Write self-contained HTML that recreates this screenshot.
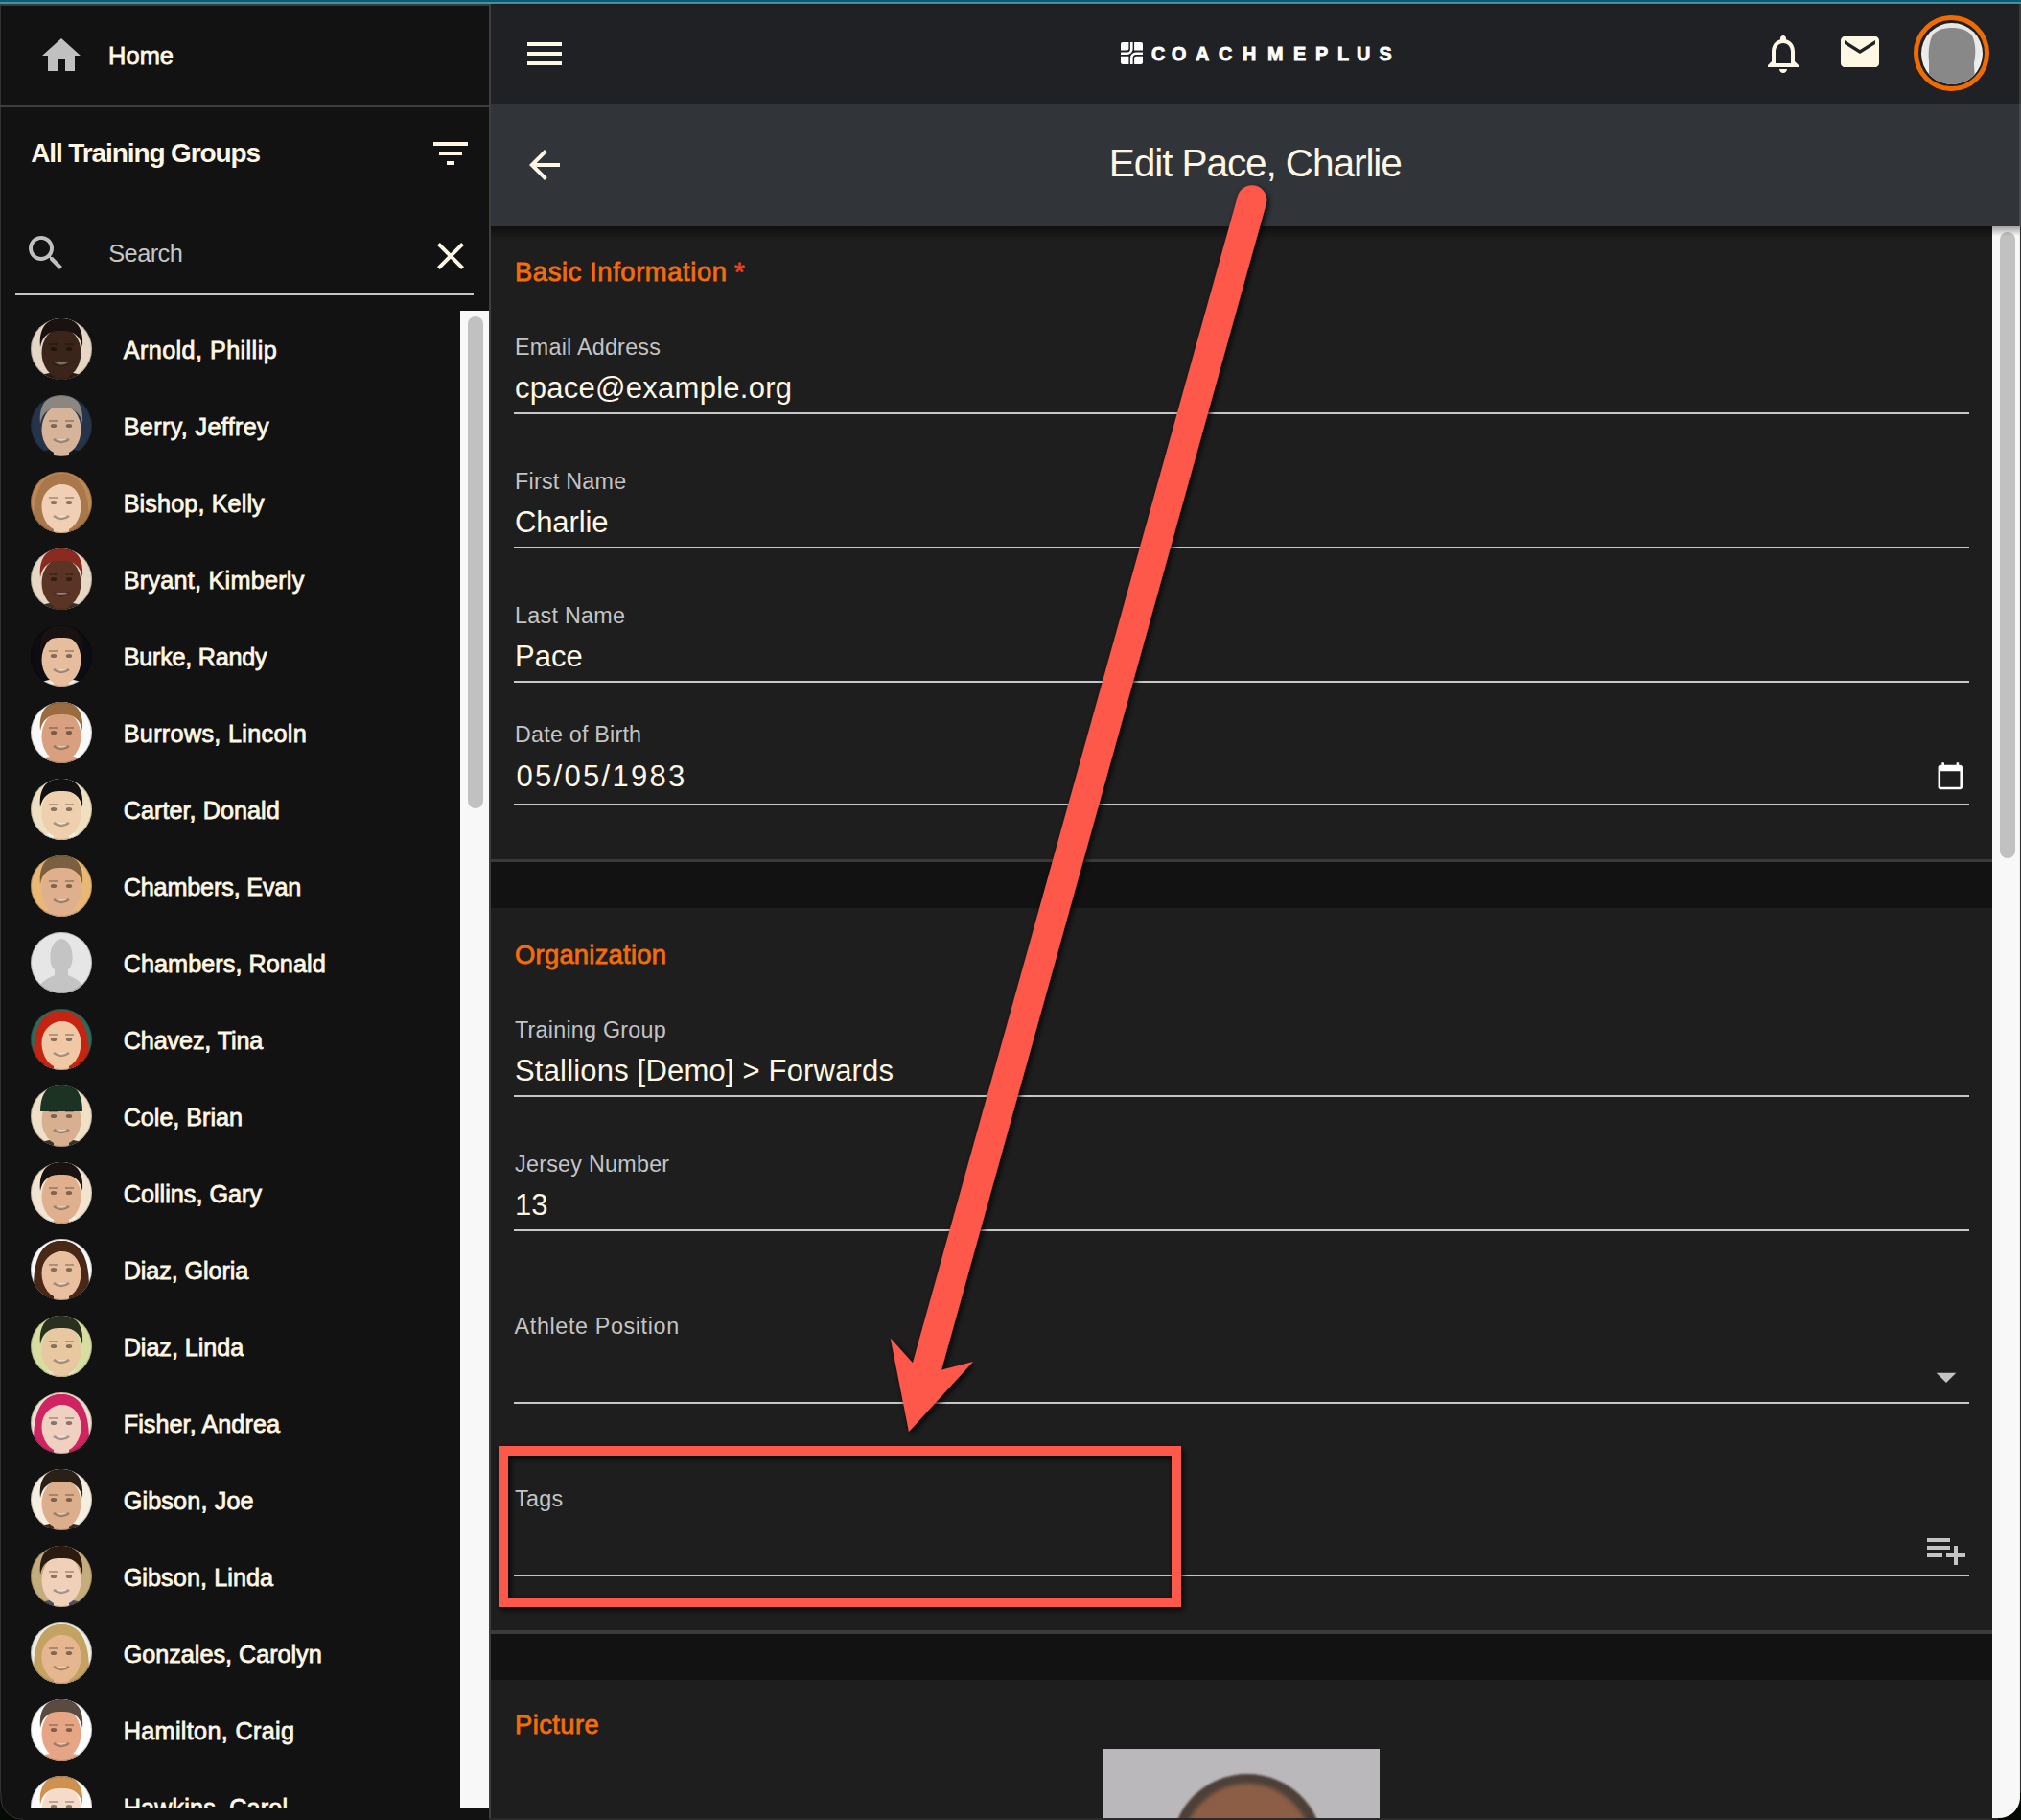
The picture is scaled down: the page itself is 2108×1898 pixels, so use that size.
<!DOCTYPE html>
<html><head><meta charset="utf-8"><title>Edit Pace, Charlie</title>
<style>
html,body{margin:0;padding:0}
body{width:2108px;height:1898px;position:relative;overflow:hidden;background:#121212;font-family:"Liberation Sans",sans-serif}
.a{position:absolute}
.t{position:absolute;white-space:nowrap;line-height:1;font-family:"Liberation Sans",sans-serif}
.ic{position:absolute}
.av{position:absolute}
.ul{position:absolute;left:536px;width:1518px;height:2px;background:#c8c8c8}
.lg{position:absolute;top:46.5px;font-size:19.8px;line-height:1;font-weight:700;color:#ffffff;-webkit-text-stroke:0.9px #fff;font-family:"Liberation Sans",sans-serif}
</style></head><body>
<!-- top teal bar -->
<div class="a" style="left:0;top:0;width:2108px;height:2px;background:#065d74"></div>
<div class="a" style="left:0;top:2px;width:2108px;height:2px;background:#4b8e9d"></div>
<div class="a" style="left:0;top:4px;width:510px;height:2px;background:#3a3a3a"></div>
<div class="a" style="left:512px;top:4px;width:1596px;height:1px;background:#1e1c1e"></div>
<!-- sidebar -->
<div class="a" style="left:0;top:6px;width:1px;height:1880px;background:#333"></div>
<div class="a" style="left:0;top:110px;width:510px;height:2px;background:#3e3e3e"></div>
<div class="a" style="left:16px;top:306px;width:478px;height:2px;background:#c4c4c4"></div>
<div class="a" style="left:0;top:324px;width:510px;height:1562px;overflow:hidden">
  <div class="a" style="left:0;top:-324px;width:510px;height:1898px">
  <svg class='av' style='left:32px;top:332px' width='64' height='64' viewBox='0 0 64 64'><defs><clipPath id='c0'><circle cx='32' cy='32' r='32'/></clipPath></defs><g clip-path='url(#c0)'><rect width='64' height='64' fill='#e6d6c6'/><ellipse cx='32' cy='72' rx='36' ry='16' fill='#2a1a14'/><rect x='24' y='50' width='16' height='14' fill='#3b2419'/><ellipse cx='32' cy='36' rx='20.5' ry='26' fill='#3b2419'/><path d='M10 30 C8 6 20 0 32 0 C44 0 56 6 54 30 C52 18 44 12 32 13 C20 12 12 18 10 30Z' fill='#1a1210'/><ellipse cx='24' cy='32' rx='3.2' ry='2' fill='#00000070'/><ellipse cx='40' cy='32' rx='3.2' ry='2' fill='#00000070'/><path d='M19 27 h9 M36 27 h9' stroke='#00000040' stroke-width='2'/><path d='M24 46 Q32 52 40 46' stroke='#00000050' stroke-width='2.5' fill='#ffffff60'/></g><circle cx='32' cy='32' r='31.5' fill='none' stroke='#00000030' stroke-width='1'/></svg>
<svg class='av' style='left:32px;top:412px' width='64' height='64' viewBox='0 0 64 64'><defs><clipPath id='c1'><circle cx='32' cy='32' r='32'/></clipPath></defs><g clip-path='url(#c1)'><rect width='64' height='64' fill='#26344a'/><ellipse cx='32' cy='72' rx='36' ry='16' fill='#15151a'/><rect x='24' y='50' width='16' height='14' fill='#d6b49a'/><ellipse cx='32' cy='36' rx='20.5' ry='26' fill='#d6b49a'/><path d='M10 30 C8 6 20 0 32 0 C44 0 56 6 54 30 C52 18 44 12 32 13 C20 12 12 18 10 30Z' fill='#8c8680'/><ellipse cx='24' cy='32' rx='3.2' ry='2' fill='#00000070'/><ellipse cx='40' cy='32' rx='3.2' ry='2' fill='#00000070'/><path d='M19 27 h9 M36 27 h9' stroke='#00000040' stroke-width='2'/><path d='M24 46 Q32 52 40 46' stroke='#00000050' stroke-width='2.5' fill='#ffffff60'/></g><circle cx='32' cy='32' r='31.5' fill='none' stroke='#00000030' stroke-width='1'/></svg>
<svg class='av' style='left:32px;top:492px' width='64' height='64' viewBox='0 0 64 64'><defs><clipPath id='c2'><circle cx='32' cy='32' r='32'/></clipPath></defs><g clip-path='url(#c2)'><rect width='64' height='64' fill='#c08a58'/><ellipse cx='32' cy='72' rx='36' ry='16' fill='#c08a58'/><path d='M4 64 C0 24 10 2 32 2 C54 2 64 24 60 64Z' fill='#a8784a'/><rect x='24' y='50' width='16' height='14' fill='#f0cfb5'/><ellipse cx='32' cy='36' rx='20.5' ry='26' fill='#f0cfb5'/><path d='M10 36 C8 8 20 2 32 2 C44 2 56 8 54 36 C50 18 42 12 30 13 C20 15 13 22 10 36Z' fill='#a8784a'/><ellipse cx='24' cy='32' rx='3.2' ry='2' fill='#00000070'/><ellipse cx='40' cy='32' rx='3.2' ry='2' fill='#00000070'/><path d='M19 27 h9 M36 27 h9' stroke='#00000040' stroke-width='2'/><path d='M24 46 Q32 52 40 46' stroke='#00000050' stroke-width='2.5' fill='#ffffff60'/></g><circle cx='32' cy='32' r='31.5' fill='none' stroke='#00000030' stroke-width='1'/></svg>
<svg class='av' style='left:32px;top:572px' width='64' height='64' viewBox='0 0 64 64'><defs><clipPath id='c3'><circle cx='32' cy='32' r='32'/></clipPath></defs><g clip-path='url(#c3)'><rect width='64' height='64' fill='#e6d8c4'/><ellipse cx='32' cy='72' rx='36' ry='16' fill='#3a3028'/><rect x='24' y='50' width='16' height='14' fill='#5a3424'/><ellipse cx='32' cy='36' rx='20.5' ry='26' fill='#5a3424'/><path d='M10 30 C8 6 20 0 32 0 C44 0 56 6 54 30 C52 18 44 12 32 13 C20 12 12 18 10 30Z' fill='#8a2a20'/><ellipse cx='24' cy='32' rx='3.2' ry='2' fill='#00000070'/><ellipse cx='40' cy='32' rx='3.2' ry='2' fill='#00000070'/><path d='M19 27 h9 M36 27 h9' stroke='#00000040' stroke-width='2'/><path d='M24 46 Q32 52 40 46' stroke='#00000050' stroke-width='2.5' fill='#ffffff60'/></g><circle cx='32' cy='32' r='31.5' fill='none' stroke='#00000030' stroke-width='1'/></svg>
<svg class='av' style='left:32px;top:652px' width='64' height='64' viewBox='0 0 64 64'><defs><clipPath id='c4'><circle cx='32' cy='32' r='32'/></clipPath></defs><g clip-path='url(#c4)'><rect width='64' height='64' fill='#0c0c12'/><ellipse cx='32' cy='72' rx='36' ry='16' fill='#f0ece6'/><rect x='24' y='50' width='16' height='14' fill='#e6be9e'/><ellipse cx='32' cy='36' rx='20.5' ry='26' fill='#e6be9e'/><path d='M10 30 C8 6 20 0 32 0 C44 0 56 6 54 30 C52 18 44 12 32 13 C20 12 12 18 10 30Z' fill='#1a1210'/><ellipse cx='24' cy='32' rx='3.2' ry='2' fill='#00000070'/><ellipse cx='40' cy='32' rx='3.2' ry='2' fill='#00000070'/><path d='M19 27 h9 M36 27 h9' stroke='#00000040' stroke-width='2'/><path d='M24 46 Q32 52 40 46' stroke='#00000050' stroke-width='2.5' fill='#ffffff60'/></g><circle cx='32' cy='32' r='31.5' fill='none' stroke='#00000030' stroke-width='1'/></svg>
<svg class='av' style='left:32px;top:732px' width='64' height='64' viewBox='0 0 64 64'><defs><clipPath id='c5'><circle cx='32' cy='32' r='32'/></clipPath></defs><g clip-path='url(#c5)'><rect width='64' height='64' fill='#fafafa'/><ellipse cx='32' cy='72' rx='36' ry='16' fill='#d8a07e'/><rect x='24' y='50' width='16' height='14' fill='#d8a07e'/><ellipse cx='32' cy='36' rx='20.5' ry='26' fill='#d8a07e'/><path d='M10 30 C8 6 20 0 32 0 C44 0 56 6 54 30 C52 18 44 12 32 13 C20 12 12 18 10 30Z' fill='#9a6c40'/><ellipse cx='24' cy='32' rx='3.2' ry='2' fill='#00000070'/><ellipse cx='40' cy='32' rx='3.2' ry='2' fill='#00000070'/><path d='M19 27 h9 M36 27 h9' stroke='#00000040' stroke-width='2'/><path d='M24 46 Q32 52 40 46' stroke='#00000050' stroke-width='2.5' fill='#ffffff60'/></g><circle cx='32' cy='32' r='31.5' fill='none' stroke='#00000030' stroke-width='1'/></svg>
<svg class='av' style='left:32px;top:812px' width='64' height='64' viewBox='0 0 64 64'><defs><clipPath id='c6'><circle cx='32' cy='32' r='32'/></clipPath></defs><g clip-path='url(#c6)'><rect width='64' height='64' fill='#efe0c2'/><ellipse cx='32' cy='72' rx='36' ry='16' fill='#f4f0ea'/><rect x='24' y='50' width='16' height='14' fill='#eecfae'/><ellipse cx='32' cy='36' rx='20.5' ry='26' fill='#eecfae'/><path d='M10 30 C8 6 20 0 32 0 C44 0 56 6 54 30 C52 18 44 12 32 13 C20 12 12 18 10 30Z' fill='#121010'/><ellipse cx='24' cy='32' rx='3.2' ry='2' fill='#00000070'/><ellipse cx='40' cy='32' rx='3.2' ry='2' fill='#00000070'/><path d='M19 27 h9 M36 27 h9' stroke='#00000040' stroke-width='2'/><path d='M24 46 Q32 52 40 46' stroke='#00000050' stroke-width='2.5' fill='#ffffff60'/></g><circle cx='32' cy='32' r='31.5' fill='none' stroke='#00000030' stroke-width='1'/></svg>
<svg class='av' style='left:32px;top:892px' width='64' height='64' viewBox='0 0 64 64'><defs><clipPath id='c7'><circle cx='32' cy='32' r='32'/></clipPath></defs><g clip-path='url(#c7)'><rect width='64' height='64' fill='#e8b874'/><ellipse cx='32' cy='72' rx='36' ry='16' fill='#e0b08e'/><rect x='24' y='50' width='16' height='14' fill='#e0b08e'/><ellipse cx='32' cy='36' rx='20.5' ry='26' fill='#e0b08e'/><path d='M10 30 C8 6 20 0 32 0 C44 0 56 6 54 30 C52 18 44 12 32 13 C20 12 12 18 10 30Z' fill='#7a6040'/><ellipse cx='24' cy='32' rx='3.2' ry='2' fill='#00000070'/><ellipse cx='40' cy='32' rx='3.2' ry='2' fill='#00000070'/><path d='M19 27 h9 M36 27 h9' stroke='#00000040' stroke-width='2'/><path d='M24 46 Q32 52 40 46' stroke='#00000050' stroke-width='2.5' fill='#ffffff60'/></g><circle cx='32' cy='32' r='31.5' fill='none' stroke='#00000030' stroke-width='1'/></svg>
<svg class='av' style='left:32px;top:972px' width='64' height='64' viewBox='0 0 64 64'><defs><clipPath id='c8'><circle cx='32' cy='32' r='32'/></clipPath></defs><g clip-path='url(#c8)'><rect width='64' height='64' fill='#e6e6e6'/><path d='M6 64 C8 52 20 47 25 45 L25 39 C18 35 18 9 32 7 C46 9 46 35 39 39 L39 45 C44 47 56 52 58 64Z' fill='#c4c4c4'/></g><circle cx='32' cy='32' r='31.5' fill='none' stroke='#00000030' stroke-width='1'/></svg>
<svg class='av' style='left:32px;top:1052px' width='64' height='64' viewBox='0 0 64 64'><defs><clipPath id='c9'><circle cx='32' cy='32' r='32'/></clipPath></defs><g clip-path='url(#c9)'><rect width='64' height='64' fill='#2e6a5c'/><ellipse cx='32' cy='72' rx='36' ry='16' fill='#f0ece6'/><path d='M4 64 C0 24 10 2 32 2 C54 2 64 24 60 64Z' fill='#c62412'/><rect x='24' y='50' width='16' height='14' fill='#f0c8a6'/><ellipse cx='32' cy='36' rx='20.5' ry='26' fill='#f0c8a6'/><path d='M10 36 C8 8 20 2 32 2 C44 2 56 8 54 36 C50 18 42 12 30 13 C20 15 13 22 10 36Z' fill='#c62412'/><ellipse cx='24' cy='32' rx='3.2' ry='2' fill='#00000070'/><ellipse cx='40' cy='32' rx='3.2' ry='2' fill='#00000070'/><path d='M19 27 h9 M36 27 h9' stroke='#00000040' stroke-width='2'/><path d='M24 46 Q32 52 40 46' stroke='#00000050' stroke-width='2.5' fill='#ffffff60'/></g><circle cx='32' cy='32' r='31.5' fill='none' stroke='#00000030' stroke-width='1'/></svg>
<svg class='av' style='left:32px;top:1132px' width='64' height='64' viewBox='0 0 64 64'><defs><clipPath id='c10'><circle cx='32' cy='32' r='32'/></clipPath></defs><g clip-path='url(#c10)'><rect width='64' height='64' fill='#efe0c8'/><ellipse cx='32' cy='72' rx='36' ry='16' fill='#3a3428'/><rect x='24' y='50' width='16' height='14' fill='#d8b090'/><ellipse cx='32' cy='36' rx='20.5' ry='26' fill='#d8b090'/><path d='M10 27 C10 4 22 -2 33 -2 C47 -1 54 8 54 27Z' fill='#1c3222'/><ellipse cx='24' cy='32' rx='3.2' ry='2' fill='#00000070'/><ellipse cx='40' cy='32' rx='3.2' ry='2' fill='#00000070'/><path d='M19 27 h9 M36 27 h9' stroke='#00000040' stroke-width='2'/><path d='M24 46 Q32 52 40 46' stroke='#00000050' stroke-width='2.5' fill='#ffffff60'/></g><circle cx='32' cy='32' r='31.5' fill='none' stroke='#00000030' stroke-width='1'/></svg>
<svg class='av' style='left:32px;top:1212px' width='64' height='64' viewBox='0 0 64 64'><defs><clipPath id='c11'><circle cx='32' cy='32' r='32'/></clipPath></defs><g clip-path='url(#c11)'><rect width='64' height='64' fill='#f2e4d2'/><ellipse cx='32' cy='72' rx='36' ry='16' fill='#f4f0ea'/><rect x='24' y='50' width='16' height='14' fill='#e0b08e'/><ellipse cx='32' cy='36' rx='20.5' ry='26' fill='#e0b08e'/><path d='M10 30 C8 6 20 0 32 0 C44 0 56 6 54 30 C52 18 44 12 32 13 C20 12 12 18 10 30Z' fill='#1a1210'/><ellipse cx='24' cy='32' rx='3.2' ry='2' fill='#00000070'/><ellipse cx='40' cy='32' rx='3.2' ry='2' fill='#00000070'/><path d='M19 27 h9 M36 27 h9' stroke='#00000040' stroke-width='2'/><path d='M24 46 Q32 52 40 46' stroke='#00000050' stroke-width='2.5' fill='#ffffff60'/></g><circle cx='32' cy='32' r='31.5' fill='none' stroke='#00000030' stroke-width='1'/></svg>
<svg class='av' style='left:32px;top:1292px' width='64' height='64' viewBox='0 0 64 64'><defs><clipPath id='c12'><circle cx='32' cy='32' r='32'/></clipPath></defs><g clip-path='url(#c12)'><rect width='64' height='64' fill='#fbfbfb'/><ellipse cx='32' cy='72' rx='36' ry='16' fill='#1e1e1e'/><path d='M4 64 C0 24 10 2 32 2 C54 2 64 24 60 64Z' fill='#4a2818'/><rect x='24' y='50' width='16' height='14' fill='#e8c0a0'/><ellipse cx='32' cy='36' rx='20.5' ry='26' fill='#e8c0a0'/><path d='M10 36 C8 8 20 2 32 2 C44 2 56 8 54 36 C50 18 42 12 30 13 C20 15 13 22 10 36Z' fill='#4a2818'/><ellipse cx='24' cy='32' rx='3.2' ry='2' fill='#00000070'/><ellipse cx='40' cy='32' rx='3.2' ry='2' fill='#00000070'/><path d='M19 27 h9 M36 27 h9' stroke='#00000040' stroke-width='2'/><path d='M24 46 Q32 52 40 46' stroke='#00000050' stroke-width='2.5' fill='#ffffff60'/></g><circle cx='32' cy='32' r='31.5' fill='none' stroke='#00000030' stroke-width='1'/></svg>
<svg class='av' style='left:32px;top:1372px' width='64' height='64' viewBox='0 0 64 64'><defs><clipPath id='c13'><circle cx='32' cy='32' r='32'/></clipPath></defs><g clip-path='url(#c13)'><rect width='64' height='64' fill='#d6dea2'/><ellipse cx='32' cy='72' rx='36' ry='16' fill='#e8e0c0'/><rect x='24' y='50' width='16' height='14' fill='#e8c8a0'/><ellipse cx='32' cy='36' rx='20.5' ry='26' fill='#e8c8a0'/><path d='M10 30 C8 6 20 0 32 0 C44 0 56 6 54 30 C52 18 44 12 32 13 C20 12 12 18 10 30Z' fill='#2a3020'/><ellipse cx='24' cy='32' rx='3.2' ry='2' fill='#00000070'/><ellipse cx='40' cy='32' rx='3.2' ry='2' fill='#00000070'/><path d='M19 27 h9 M36 27 h9' stroke='#00000040' stroke-width='2'/><path d='M24 46 Q32 52 40 46' stroke='#00000050' stroke-width='2.5' fill='#ffffff60'/></g><circle cx='32' cy='32' r='31.5' fill='none' stroke='#00000030' stroke-width='1'/></svg>
<svg class='av' style='left:32px;top:1452px' width='64' height='64' viewBox='0 0 64 64'><defs><clipPath id='c14'><circle cx='32' cy='32' r='32'/></clipPath></defs><g clip-path='url(#c14)'><rect width='64' height='64' fill='#eedfce'/><ellipse cx='32' cy='72' rx='36' ry='16' fill='#2a2a2a'/><path d='M4 64 C0 24 10 2 32 2 C54 2 64 24 60 64Z' fill='#d02462'/><rect x='24' y='50' width='16' height='14' fill='#f0d0c0'/><ellipse cx='32' cy='36' rx='20.5' ry='26' fill='#f0d0c0'/><path d='M10 36 C8 8 20 2 32 2 C44 2 56 8 54 36 C50 18 42 12 30 13 C20 15 13 22 10 36Z' fill='#d02462'/><ellipse cx='24' cy='32' rx='3.2' ry='2' fill='#00000070'/><ellipse cx='40' cy='32' rx='3.2' ry='2' fill='#00000070'/><path d='M19 27 h9 M36 27 h9' stroke='#00000040' stroke-width='2'/><path d='M24 46 Q32 52 40 46' stroke='#00000050' stroke-width='2.5' fill='#ffffff60'/></g><circle cx='32' cy='32' r='31.5' fill='none' stroke='#00000030' stroke-width='1'/></svg>
<svg class='av' style='left:32px;top:1532px' width='64' height='64' viewBox='0 0 64 64'><defs><clipPath id='c15'><circle cx='32' cy='32' r='32'/></clipPath></defs><g clip-path='url(#c15)'><rect width='64' height='64' fill='#f6eee0'/><ellipse cx='32' cy='72' rx='36' ry='16' fill='#3a2a20'/><rect x='24' y='50' width='16' height='14' fill='#dcae8c'/><ellipse cx='32' cy='36' rx='20.5' ry='26' fill='#dcae8c'/><path d='M10 30 C8 6 20 0 32 0 C44 0 56 6 54 30 C52 18 44 12 32 13 C20 12 12 18 10 30Z' fill='#2a2018'/><ellipse cx='24' cy='32' rx='3.2' ry='2' fill='#00000070'/><ellipse cx='40' cy='32' rx='3.2' ry='2' fill='#00000070'/><path d='M19 27 h9 M36 27 h9' stroke='#00000040' stroke-width='2'/><path d='M24 46 Q32 52 40 46' stroke='#00000050' stroke-width='2.5' fill='#ffffff60'/></g><circle cx='32' cy='32' r='31.5' fill='none' stroke='#00000030' stroke-width='1'/></svg>
<svg class='av' style='left:32px;top:1612px' width='64' height='64' viewBox='0 0 64 64'><defs><clipPath id='c16'><circle cx='32' cy='32' r='32'/></clipPath></defs><g clip-path='url(#c16)'><rect width='64' height='64' fill='#c4ac7c'/><ellipse cx='32' cy='72' rx='36' ry='16' fill='#4a5262'/><rect x='24' y='50' width='16' height='14' fill='#f0d0b8'/><ellipse cx='32' cy='36' rx='20.5' ry='26' fill='#f0d0b8'/><path d='M10 30 C8 6 20 0 32 0 C44 0 56 6 54 30 C52 18 44 12 32 13 C20 12 12 18 10 30Z' fill='#2a1a10'/><ellipse cx='24' cy='32' rx='3.2' ry='2' fill='#00000070'/><ellipse cx='40' cy='32' rx='3.2' ry='2' fill='#00000070'/><path d='M19 27 h9 M36 27 h9' stroke='#00000040' stroke-width='2'/><path d='M24 46 Q32 52 40 46' stroke='#00000050' stroke-width='2.5' fill='#ffffff60'/></g><circle cx='32' cy='32' r='31.5' fill='none' stroke='#00000030' stroke-width='1'/></svg>
<svg class='av' style='left:32px;top:1692px' width='64' height='64' viewBox='0 0 64 64'><defs><clipPath id='c17'><circle cx='32' cy='32' r='32'/></clipPath></defs><g clip-path='url(#c17)'><rect width='64' height='64' fill='#eeeee6'/><ellipse cx='32' cy='72' rx='36' ry='16' fill='#e6b690'/><path d='M4 64 C0 24 10 2 32 2 C54 2 64 24 60 64Z' fill='#c4a262'/><rect x='24' y='50' width='16' height='14' fill='#e6b690'/><ellipse cx='32' cy='36' rx='20.5' ry='26' fill='#e6b690'/><path d='M10 36 C8 8 20 2 32 2 C44 2 56 8 54 36 C50 18 42 12 30 13 C20 15 13 22 10 36Z' fill='#c4a262'/><ellipse cx='24' cy='32' rx='3.2' ry='2' fill='#00000070'/><ellipse cx='40' cy='32' rx='3.2' ry='2' fill='#00000070'/><path d='M19 27 h9 M36 27 h9' stroke='#00000040' stroke-width='2'/><path d='M24 46 Q32 52 40 46' stroke='#00000050' stroke-width='2.5' fill='#ffffff60'/></g><circle cx='32' cy='32' r='31.5' fill='none' stroke='#00000030' stroke-width='1'/></svg>
<svg class='av' style='left:32px;top:1772px' width='64' height='64' viewBox='0 0 64 64'><defs><clipPath id='c18'><circle cx='32' cy='32' r='32'/></clipPath></defs><g clip-path='url(#c18)'><rect width='64' height='64' fill='#fdfdfd'/><ellipse cx='32' cy='72' rx='36' ry='16' fill='#e6a686'/><rect x='24' y='50' width='16' height='14' fill='#e6a686'/><ellipse cx='32' cy='36' rx='20.5' ry='26' fill='#e6a686'/><path d='M10 30 C8 6 20 0 32 0 C44 0 56 6 54 30 C52 18 44 12 32 13 C20 12 12 18 10 30Z' fill='#5a4a40'/><ellipse cx='24' cy='32' rx='3.2' ry='2' fill='#00000070'/><ellipse cx='40' cy='32' rx='3.2' ry='2' fill='#00000070'/><path d='M19 27 h9 M36 27 h9' stroke='#00000040' stroke-width='2'/><path d='M24 46 Q32 52 40 46' stroke='#00000050' stroke-width='2.5' fill='#ffffff60'/></g><circle cx='32' cy='32' r='31.5' fill='none' stroke='#00000030' stroke-width='1'/></svg>
<svg class='av' style='left:32px;top:1852px' width='64' height='64' viewBox='0 0 64 64'><defs><clipPath id='c19'><circle cx='32' cy='32' r='32'/></clipPath></defs><g clip-path='url(#c19)'><rect width='64' height='64' fill='#fdfdfd'/><ellipse cx='32' cy='72' rx='36' ry='16' fill='#f6dcc8'/><rect x='24' y='50' width='16' height='14' fill='#f6dcc8'/><ellipse cx='32' cy='36' rx='20.5' ry='26' fill='#f6dcc8'/><path d='M10 30 C8 6 20 0 32 0 C44 0 56 6 54 30 C52 18 44 12 32 13 C20 12 12 18 10 30Z' fill='#d09050'/><ellipse cx='24' cy='32' rx='3.2' ry='2' fill='#00000070'/><ellipse cx='40' cy='32' rx='3.2' ry='2' fill='#00000070'/><path d='M19 27 h9 M36 27 h9' stroke='#00000040' stroke-width='2'/><path d='M24 46 Q32 52 40 46' stroke='#00000050' stroke-width='2.5' fill='#ffffff60'/></g><circle cx='32' cy='32' r='31.5' fill='none' stroke='#00000030' stroke-width='1'/></svg>
  </div>
</div>
<div class="a" style="left:480px;top:324px;width:30px;height:1562px;background:#f8f8f8"></div>
<div class="a" style="left:488px;top:330px;width:16px;height:513px;border-radius:8px;background:#c1c1c1"></div>
<div class="a" style="left:510px;top:4px;width:2px;height:1894px;background:#3e3e3e"></div>
<!-- main header -->
<div class="a" style="left:512px;top:5px;width:1596px;height:103px;background:#202124"></div>
<div class="a" style="left:512px;top:108px;width:1596px;height:128px;background:#313439"></div>
<!-- cards -->
<div class="a" style="left:512px;top:236px;width:1566px;height:660px;background:#1e1e1e"></div>
<div class="a" style="left:512px;top:236px;width:1566px;height:14px;background:linear-gradient(#0f0f0f,#1e1e1e00)"></div>
<div class="a" style="left:512px;top:896px;width:1566px;height:3px;background:#3a3a3a"></div>
<div class="a" style="left:512px;top:947px;width:1566px;height:753px;background:#1e1e1e"></div>
<div class="a" style="left:512px;top:1700px;width:1566px;height:4px;background:#3a3a3a"></div>
<div class="a" style="left:512px;top:1752px;width:1566px;height:146px;background:#1e1e1e"></div>
<!-- main scrollbar -->
<div class="a" style="left:2078px;top:236px;width:29px;height:1662px;background:#f8f8f8"></div>
<div class="a" style="left:2086px;top:242px;width:16px;height:653px;border-radius:8px;background:#c1c1c1"></div>
<div class="a" style="left:2078px;top:236px;width:30px;height:10px;background:linear-gradient(rgba(0,0,0,0.35),rgba(0,0,0,0))"></div>
<div class="a" style="left:2106px;top:4px;width:2px;height:1894px;background:rgba(184,184,184,0.17)"></div>
<div class='ul' style='top:430px'></div><div class='ul' style='top:570px'></div><div class='ul' style='top:710px'></div><div class='ul' style='top:838px'></div><div class='ul' style='top:1142px'></div><div class='ul' style='top:1282px'></div><div class='ul' style='top:1462px'></div><div class='ul' style='top:1642px'></div>
<!-- dropdown arrow -->
<svg class="a" style="left:2019px;top:1431px" width="22" height="12" viewBox="0 0 22 12"><path d="M0.7 0.8h20.6L11 11z" fill="#c4c4c4"/></svg>
<!-- playlist add -->
<div class="a" style="left:2010px;top:1604px;width:24px;height:4px;background:#c4c4c4"></div>
<div class="a" style="left:2010px;top:1612px;width:24px;height:4px;background:#c4c4c4"></div>
<div class="a" style="left:2010px;top:1620px;width:16px;height:4px;background:#c4c4c4"></div>
<div class="a" style="left:2038px;top:1612px;width:4px;height:20px;background:#c4c4c4"></div>
<div class="a" style="left:2030px;top:1620px;width:20px;height:4px;background:#c4c4c4"></div>
<!-- logo -->
<svg class="a" style="left:1169px;top:44px" width="23" height="23" viewBox="0 0 23 23">
 <path d="M2 0H8.4V6.4Q8.4 8.4 6.4 8.4H0V2Q0 0 2 0Z" fill="#fff"/>
 <path d="M14.1 0H21Q23 0 23 2V8.4H14.1Z" fill="#fff"/>
 <path d="M0 14.8H8.4V23H2Q0 23 0 21Z" fill="#fff"/>
 <path d="M16.1 14.8H23V21Q23 23 21 23H14.1V16.8Q14.1 14.8 16.1 14.8Z" fill="#fff"/>
 <path d="M9.9 0H12.6V6.9A6 6 0 0 1 6.6 12.9H0V10.4H6.6A3.3 3.5 0 0 0 9.9 6.9Z" fill="#fff"/>
 <path d="M23 10.4H15.9A6 6 0 0 0 9.9 16.4V23H12.6V16.4A3.3 3.5 0 0 1 15.9 12.9H23Z" fill="#fff"/>
</svg>
<div class='lg' style='left:1201px'>C</div><div class='lg' style='left:1222px'>O</div><div class='lg' style='left:1247px'>A</div><div class='lg' style='left:1271px'>C</div><div class='lg' style='left:1296px'>H</div><div class='lg' style='left:1322px'>M</div><div class='lg' style='left:1349px'>E</div><div class='lg' style='left:1372px'>P</div><div class='lg' style='left:1395px'>L</div><div class='lg' style='left:1415px'>U</div><div class='lg' style='left:1438.6px'>S</div>
<!-- profile avatar -->
<div class="a" style="left:1996px;top:16px;width:69px;height:69px;border-radius:50%;border:5.5px solid #f26b00;background:#202124"></div>
<svg class="a" style="left:2004px;top:24px" width="64" height="64" viewBox="0 0 64 64"><defs><clipPath id="pc"><circle cx="32" cy="32" r="32"/></clipPath><radialGradient id="pg" cx="50%" cy="40%" r="60%"><stop offset="0" stop-color="#d0d0d0"/><stop offset="1" stop-color="#f4f4f4"/></radialGradient></defs><g clip-path="url(#pc)"><rect width="64" height="64" fill="url(#pg)"/><path d="M8 64 L8 40 C7 30 8 20 12 12 C18 6 26 5 32 5 C40 5 48 7 53 13 C57 22 57 32 55 42 L56 64Z" fill="#888"/></g></svg>
<svg class='ic' style='left:40px;top:34px' width='48' height='48' viewBox='0 0 24 24'><path d='M10 20v-6h4v6h5v-8h3L12 3 2 12h3v8z' fill='#c0c0c0'/></svg><svg class='ic' style='left:445.5px;top:136px' width='48' height='48' viewBox='0 0 24 24'><path d='M10 18h4v-2h-4v2zM3 6v2h18V6H3zm3 7h12v-2H6v2z' fill='#fdf7e4'/></svg><svg class='ic' style='left:23.6px;top:239.7px' width='48' height='48' viewBox='0 0 24 24'><path d='M15.5 14h-.79l-.28-.27C15.41 12.59 16 11.11 16 9.5 16 5.91 13.09 3 9.5 3S3 5.91 3 9.5 5.91 16 9.5 16c1.61 0 3.09-.59 4.23-1.57l.27.28v.79l5 4.99L20.49 19l-4.99-5zm-6 0C7.01 14 5 11.990 5 9.5S7.01 5 9.5 5 14 7.01 14 9.5 11.99 14 9.5 14z' fill='#c0c0c0'/></svg><svg class='ic' style='left:446px;top:243.4px' width='48' height='48' viewBox='0 0 24 24'><path d='M19 6.41L17.59 5 12 10.59 6.41 5 5 6.41 10.59 12 5 17.59 6.41 19 12 13.41 17.59 19 19 17.59 13.41 12z' fill='#fdf7e4'/></svg><svg class='ic' style='left:544px;top:31.7px' width='48' height='48' viewBox='0 0 24 24'><path d='M3 18h18v-2H3v2zm0-5h18v-2H3v2zm0-7v2h18V6H3z' fill='#fdf7e4'/></svg><svg class='ic' style='left:544px;top:147.6px' width='48' height='48' viewBox='0 0 24 24'><path d='M20 11H7.83l5.59-5.59L12 4l-8 8 8 8 1.41-1.41L7.83 13H20v-2z' fill='#fdf7e4'/></svg><svg class='ic' style='left:1836px;top:31.6px' width='48' height='48' viewBox='0 0 24 24'><path d='M12 22c1.1 0 2-.9 2-2h-4c0 1.1.89 2 2 2zm6-6v-5c0-3.07-1.64-5.64-4.5-6.32V4c0-.83-.67-1.5-1.5-1.5s-1.5.67-1.5 1.5v.68C7.63 5.36 6 7.92 6 11v5l-2 2v1h16v-1l-2-2zm-2 1H8v-6c0-2.48 1.51-4.5 4-4.5s4 2.020 4 4.5v6z' fill='#fdf7e4'/></svg><svg class='ic' style='left:1916px;top:29.8px' width='48' height='48' viewBox='0 0 24 24'><path d='M20 4H4c-1.1 0-1.99.9-1.99 2L2 18c0 1.1.9 2 2 2h16c1.1 0 2-.9 2-2V6c0-1.1-.9-2-2-2zm0 4l-8 5-8-5V6l8 5 8-5v2z' fill='#fdf7e4'/></svg><svg class='ic' style='left:2019px;top:793.7px' width='30.5' height='30.5' viewBox='0 0 24 24'><path d='M20 3h-1V1h-2v2H7V1H5v2H4c-1.1 0-2 .9-2 2v16c0 1.1.9 2 2 2h16c1.1 0 2-.9 2-2V5c0-1.1-.9-2-2-2zm0 18H4V8h16v13z' fill='#ffffff'/></svg>
<!-- picture -->
<div class="a" style="left:1151px;top:1824px;width:288px;height:74px;background:#bab8bb;overflow:hidden">
  <div class="a" style="left:72px;top:26px;width:156px;height:150px;border-radius:50%;background:#4e4038;filter:blur(1px)"></div>
  <div class="a" style="left:80px;top:36px;width:140px;height:150px;border-radius:50%;background:#8c5e46;filter:blur(2px)"></div>
</div>
<!-- bottom strip -->
<div class="a" style="left:0;top:1885px;width:510px;height:13px;background:#121212"></div>
<div class="a" style="left:0;top:1896px;width:2108px;height:2px;background:#2a2a2a"></div>
<div class='t' style='left:113.00px;top:45.90px;font-size:25.4px;font-weight:400;color:#fdf7e4;letter-spacing:0.089px;-webkit-text-stroke:0.8px #fdf7e4'>Home</div>
<div class='t' style='left:32.20px;top:145.50px;font-size:28px;font-weight:700;color:#fdf7e4;letter-spacing:-1.100px'>All Training Groups</div>
<div class='t' style='left:113.20px;top:251.70px;font-size:25.4px;font-weight:400;color:#c4c4c4;letter-spacing:-0.551px'>Search</div>
<div class='t' style='left:128.70px;top:352.57px;font-size:25.2px;font-weight:400;color:#fdf7e4;letter-spacing:0.427px;-webkit-text-stroke:0.8px #fdf7e4'>Arnold, Phillip</div>
<div class='t' style='left:128.70px;top:432.57px;font-size:25.2px;font-weight:400;color:#fdf7e4;letter-spacing:0.351px;-webkit-text-stroke:0.8px #fdf7e4'>Berry, Jeffrey</div>
<div class='t' style='left:128.70px;top:512.57px;font-size:25.2px;font-weight:400;color:#fdf7e4;letter-spacing:0.116px;-webkit-text-stroke:0.8px #fdf7e4'>Bishop, Kelly</div>
<div class='t' style='left:128.70px;top:592.57px;font-size:25.2px;font-weight:400;color:#fdf7e4;letter-spacing:0.256px;-webkit-text-stroke:0.8px #fdf7e4'>Bryant, Kimberly</div>
<div class='t' style='left:128.70px;top:672.57px;font-size:25.2px;font-weight:400;color:#fdf7e4;letter-spacing:-0.237px;-webkit-text-stroke:0.8px #fdf7e4'>Burke, Randy</div>
<div class='t' style='left:128.70px;top:752.57px;font-size:25.2px;font-weight:400;color:#fdf7e4;letter-spacing:0.320px;-webkit-text-stroke:0.8px #fdf7e4'>Burrows, Lincoln</div>
<div class='t' style='left:128.70px;top:832.57px;font-size:25.2px;font-weight:400;color:#fdf7e4;letter-spacing:0.046px;-webkit-text-stroke:0.8px #fdf7e4'>Carter, Donald</div>
<div class='t' style='left:128.70px;top:912.57px;font-size:25.2px;font-weight:400;color:#fdf7e4;letter-spacing:-0.153px;-webkit-text-stroke:0.8px #fdf7e4'>Chambers, Evan</div>
<div class='t' style='left:128.70px;top:992.57px;font-size:25.2px;font-weight:400;color:#fdf7e4;letter-spacing:0.067px;-webkit-text-stroke:0.8px #fdf7e4'>Chambers, Ronald</div>
<div class='t' style='left:128.70px;top:1072.57px;font-size:25.2px;font-weight:400;color:#fdf7e4;letter-spacing:-0.120px;-webkit-text-stroke:0.8px #fdf7e4'>Chavez, Tina</div>
<div class='t' style='left:128.70px;top:1152.57px;font-size:25.2px;font-weight:400;color:#fdf7e4;letter-spacing:-0.031px;-webkit-text-stroke:0.8px #fdf7e4'>Cole, Brian</div>
<div class='t' style='left:128.70px;top:1232.57px;font-size:25.2px;font-weight:400;color:#fdf7e4;letter-spacing:0.019px;-webkit-text-stroke:0.8px #fdf7e4'>Collins, Gary</div>
<div class='t' style='left:128.70px;top:1312.57px;font-size:25.2px;font-weight:400;color:#fdf7e4;letter-spacing:-0.080px;-webkit-text-stroke:0.8px #fdf7e4'>Diaz, Gloria</div>
<div class='t' style='left:128.70px;top:1392.57px;font-size:25.2px;font-weight:400;color:#fdf7e4;letter-spacing:-0.042px;-webkit-text-stroke:0.8px #fdf7e4'>Diaz, Linda</div>
<div class='t' style='left:128.70px;top:1472.57px;font-size:25.2px;font-weight:400;color:#fdf7e4;letter-spacing:0.068px;-webkit-text-stroke:0.8px #fdf7e4'>Fisher, Andrea</div>
<div class='t' style='left:128.70px;top:1552.57px;font-size:25.2px;font-weight:400;color:#fdf7e4;letter-spacing:0.148px;-webkit-text-stroke:0.8px #fdf7e4'>Gibson, Joe</div>
<div class='t' style='left:128.70px;top:1632.57px;font-size:25.2px;font-weight:400;color:#fdf7e4;letter-spacing:0.080px;-webkit-text-stroke:0.8px #fdf7e4'>Gibson, Linda</div>
<div class='t' style='left:128.70px;top:1712.57px;font-size:25.2px;font-weight:400;color:#fdf7e4;letter-spacing:-0.013px;-webkit-text-stroke:0.8px #fdf7e4'>Gonzales, Carolyn</div>
<div class='t' style='left:128.70px;top:1792.57px;font-size:25.2px;font-weight:400;color:#fdf7e4;letter-spacing:0.337px;-webkit-text-stroke:0.8px #fdf7e4'>Hamilton, Craig</div>
<div class='t' style='left:128.70px;top:1872.57px;font-size:25.2px;font-weight:400;color:#fdf7e4;letter-spacing:0.156px;-webkit-text-stroke:0.8px #fdf7e4'>Hawkins, Carol</div>
<div class='t' style='left:1156.80px;top:150.33px;font-size:40.6px;font-weight:400;color:#fdf7e4;letter-spacing:-1.106px'>Edit Pace, Charlie</div>
<div class='t' style='left:537.00px;top:269.81px;font-size:27.4px;font-weight:400;color:#f46c0c;letter-spacing:0.587px;-webkit-text-stroke:0.8px #f46c0c'>Basic Information</div>
<div class='t' style='left:766.00px;top:269.81px;font-size:27.4px;font-weight:400;color:#e8401c;letter-spacing:0.000px;-webkit-text-stroke:0.8px #e8401c'>*</div>
<div class='t' style='left:537.00px;top:351.28px;font-size:23.3px;font-weight:400;color:#c4c4c4;letter-spacing:0.248px'>Email Address</div>
<div class='t' style='left:537.00px;top:491.28px;font-size:23.3px;font-weight:400;color:#c4c4c4;letter-spacing:0.253px'>First Name</div>
<div class='t' style='left:537.00px;top:631.28px;font-size:23.3px;font-weight:400;color:#c4c4c4;letter-spacing:0.282px'>Last Name</div>
<div class='t' style='left:537.00px;top:755.28px;font-size:23.3px;font-weight:400;color:#c4c4c4;letter-spacing:0.216px'>Date of Birth</div>
<div class='t' style='left:537.00px;top:1063.28px;font-size:23.3px;font-weight:400;color:#c4c4c4;letter-spacing:0.238px'>Training Group</div>
<div class='t' style='left:537.00px;top:1203.28px;font-size:23.3px;font-weight:400;color:#c4c4c4;letter-spacing:0.263px'>Jersey Number</div>
<div class='t' style='left:536.60px;top:1372.28px;font-size:23.3px;font-weight:400;color:#c4c4c4;letter-spacing:0.641px'>Athlete Position</div>
<div class='t' style='left:537.00px;top:1552.48px;font-size:23.3px;font-weight:400;color:#c4c4c4;letter-spacing:0.328px'>Tags</div>
<div class='t' style='left:537.00px;top:388.66px;font-size:31px;font-weight:400;color:#fdf7e4;letter-spacing:0.263px'>cpace@example.org</div>
<div class='t' style='left:537.00px;top:529.06px;font-size:31px;font-weight:400;color:#fdf7e4;letter-spacing:-0.136px'>Charlie</div>
<div class='t' style='left:537.00px;top:669.06px;font-size:31px;font-weight:400;color:#fdf7e4;letter-spacing:0.000px'>Pace</div>
<div class='t' style='left:538.50px;top:794.06px;font-size:31px;font-weight:400;color:#fdf7e4;letter-spacing:2.294px'>05/05/1983</div>
<div class='t' style='left:537.00px;top:1101.06px;font-size:31px;font-weight:400;color:#fdf7e4;letter-spacing:0.183px'>Stallions [Demo] &gt; Forwards</div>
<div class='t' style='left:537.00px;top:1241.06px;font-size:31px;font-weight:400;color:#fdf7e4;letter-spacing:0.000px'>13</div>
<div class='t' style='left:537.00px;top:982.31px;font-size:27.4px;font-weight:400;color:#f46c0c;letter-spacing:0.244px;-webkit-text-stroke:0.8px #f46c0c'>Organization</div>
<div class='t' style='left:537.00px;top:1785.31px;font-size:27.4px;font-weight:400;color:#f46c0c;letter-spacing:0.408px;-webkit-text-stroke:0.8px #f46c0c'>Picture</div>
<!-- bottom clip cover -->
<div class="a" style="left:1px;top:1886px;width:509px;height:12px;background:#121212"></div>
<svg class="a" style="left:0;top:1870px" width="24" height="28" viewBox="0 0 24 28"><path d="M0 0 V28 H24 V26 A22 22 0 0 1 1 6 V0Z" fill="#060a04"/><path d="M1 0 V6 A22 22 0 0 0 24 27" stroke="#3a3a3a" stroke-width="1" fill="none"/></svg>
<svg class="a" style="left:2084px;top:1870px" width="24" height="28" viewBox="0 0 24 28"><path d="M24 0 V28 H0 V26 A22 22 0 0 0 23 6 V0Z" fill="#060a04"/></svg>
<!-- annotation -->
<svg class="a" style="left:0;top:0" width="2108" height="1898" viewBox="0 0 2108 1898">
 <defs><filter id="sh" x="-20%" y="-20%" width="140%" height="140%"><feDropShadow dx="2" dy="3" stdDeviation="3" flood-color="#000" flood-opacity="0.85"/></filter></defs>
 <g filter="url(#sh)" fill="#fd594a">
  <line x1="1305.8" y1="208.6" x2="967" y2="1425" stroke="#fd594a" stroke-width="30.8" stroke-linecap="round"/>
  <path d="M951.7 1421 L928.8 1395.6 L948 1493 L1015 1420 L981 1429 Z"/>
 </g>
 <rect x="525" y="1513" width="702" height="158" fill="none" stroke="#fd594a" stroke-width="10" filter="url(#sh)"/>
</svg>
</body></html>
